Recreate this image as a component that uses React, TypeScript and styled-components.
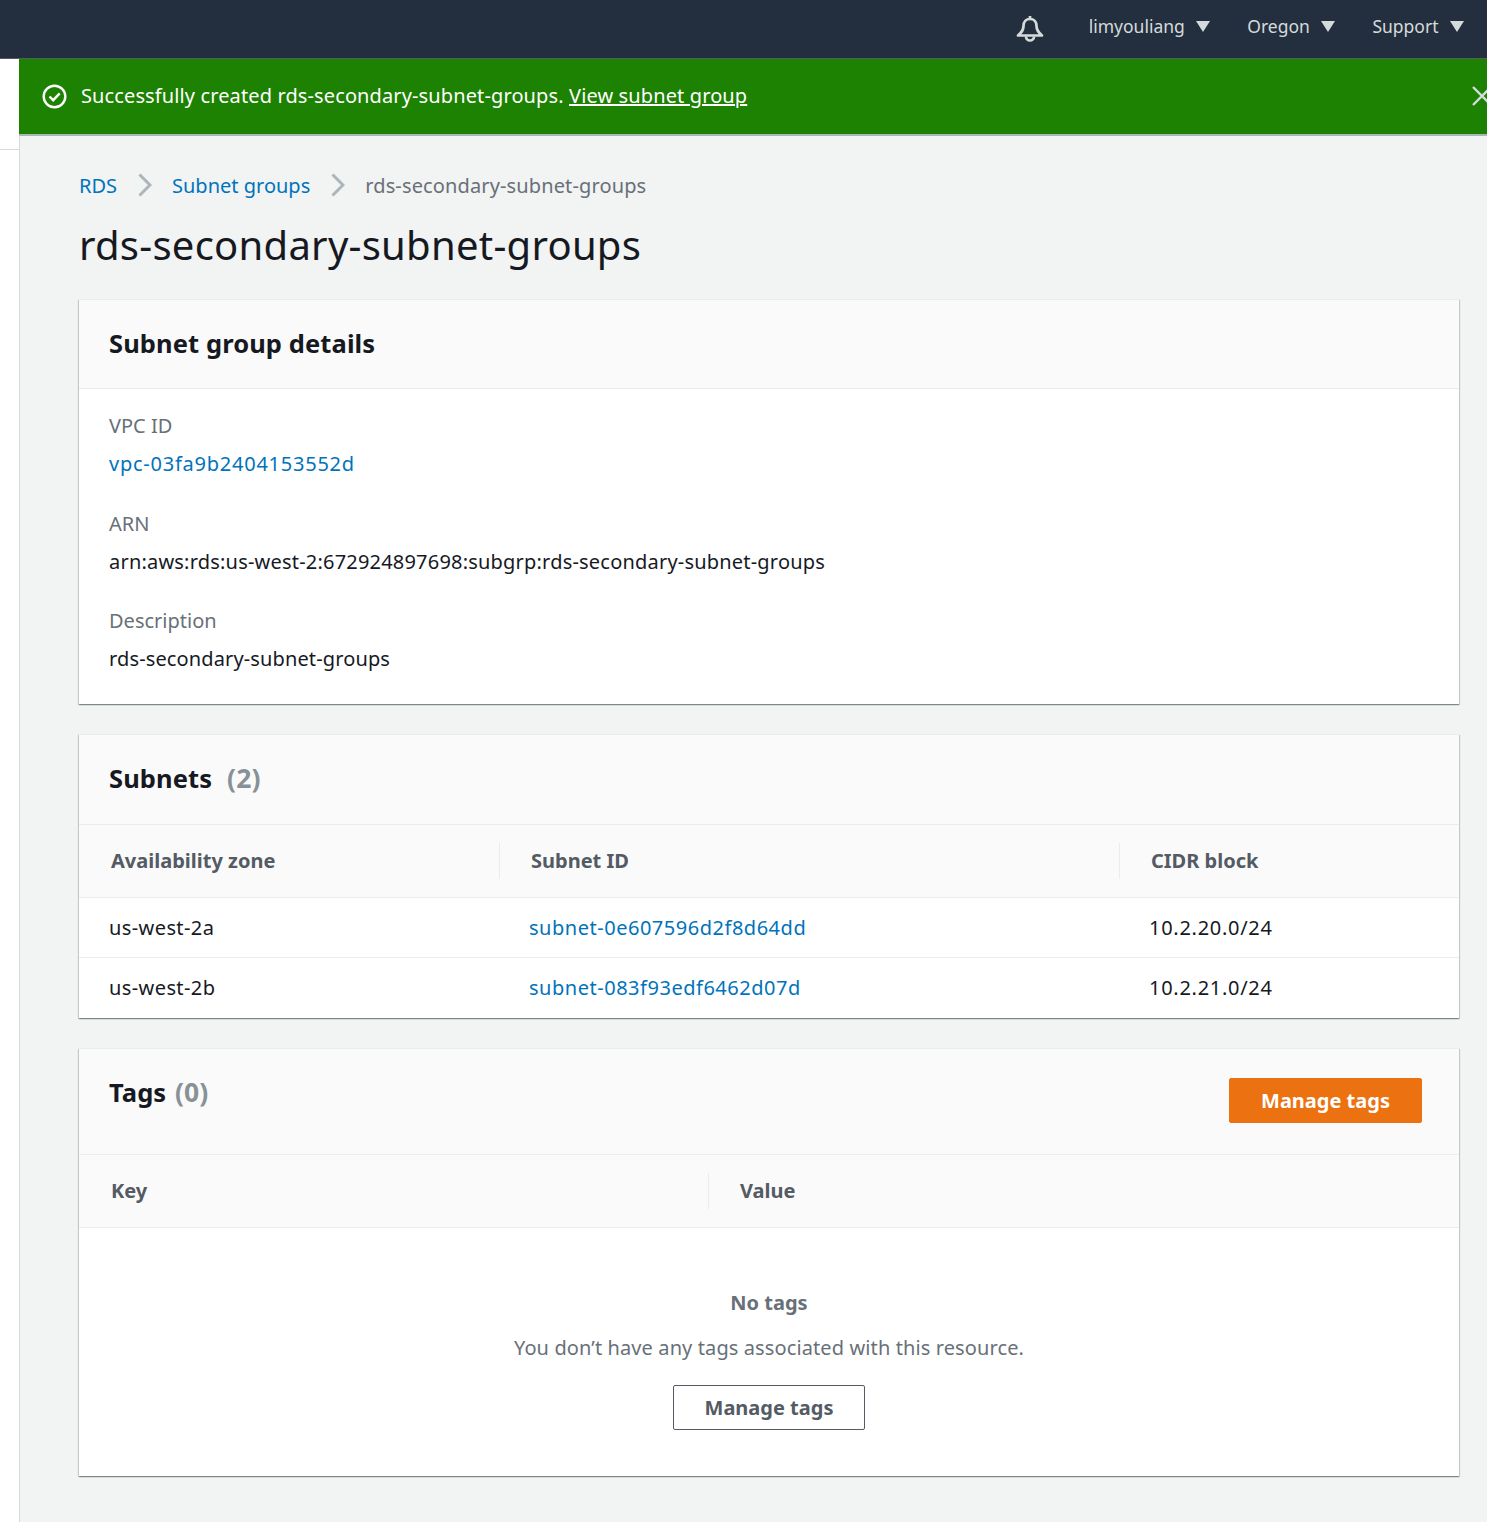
import React from 'react'
import styled, { createGlobalStyle } from 'styled-components'

const GlobalStyle = createGlobalStyle`
  html, body {
    margin: 0;
    padding: 0;
    background: #f2f3f3;
    overflow: hidden;
  }
  body {
    font-family: 'Noto Sans', 'Open Sans', sans-serif;
    font-size: 20px;
    color: #16191f;
  }
  * { box-sizing: border-box; }
`

const Page = styled.div`
  width: 1487px;
  height: 1522px;
  overflow: hidden;
`

const TopNav = styled.header`
  height: 59px;
  background: #232f3e;
  border-bottom: 1px solid #545b64;
  display: flex;
  align-items: center;
  justify-content: flex-end;
  padding-right: 23px;
  padding-bottom: 6px;
  color: #d5dbdb;
`

const BellButton = styled.span`
  display: flex;
  margin-right: 45px;
  margin-top: 6px;
`

const NavItem = styled.span<{ $gap: number }>`
  display: flex;
  align-items: center;
  gap: 11.5px;
  font-size: 17.5px;
  margin-left: ${p => p.$gap}px;
`

const Shell = styled.div`
  display: flex;
  align-items: stretch;
  height: 1463px;
`

const SideRail = styled.aside`
  width: 20px;
  flex: none;
  background: #fff;
  border-right: 1px solid #d5dbdb;
  padding-top: 90px;
`

const RailLine = styled.div`
  height: 1px;
  background: #d5dbdb;
`

const Content = styled.main`
  flex: 1;
  min-width: 0;
`

const Flash = styled.div`
  height: 77px;
  margin-left: -1px;
  background: #1d8102;
  border-bottom: 2px solid #aab7b8;
  display: flex;
  align-items: center;
  padding-left: 23px;
  color: #fff;
  font-size: 20px;
  position: relative;
`

const FlashText = styled.span`
  margin-left: 14px;
  padding-bottom: 2px;
  letter-spacing: 0.12px;
  a {
    color: #fff;
    text-decoration: underline;
  }
`

const CloseIcon = styled.span`
  position: absolute;
  left: 1453px;
  top: 27px;
  display: flex;
`

const Main = styled.div`
  padding: 0 28px 0 59px;
`

const Crumbs = styled.nav`
  display: flex;
  align-items: center;
  height: 30px;
  margin-top: 34px;
  font-size: 20px;
`

const Crumb = styled.a`
  color: #0073bb;
`

const CurrentCrumb = styled.span`
  color: #687078;
  letter-spacing: 0.13px;
`

const CrumbArrow = styled.span`
  display: flex;
  margin: 0 20.5px;
`

const Title = styled.h1`
  font-size: 40px;
  font-weight: 400;
  line-height: 50px;
  letter-spacing: 0.26px;
  margin: 20px 0 29px;
`

const Card = styled.section`
  background: #fff;
  box-shadow: 0 1px 1px 0 rgba(0, 28, 36, 0.3), 1px 1px 1px 0 rgba(0, 28, 36, 0.15), -1px 1px 1px 0 rgba(0, 28, 36, 0.15);
  border-top: 1px solid #eaeded;
  margin-bottom: 30px;
`

const CardHeader = styled.div<{ $height: number }>`
  height: ${p => p.$height}px;
  background: #fafafa;
  border-bottom: 1px solid #eaeded;
  display: flex;
  justify-content: space-between;
  padding: 0 37px 0 30px;
`

const CardTitle = styled.h2`
  margin: 25px 0 0;
  font-size: 25.5px;
  line-height: 36px;
  font-weight: 700;
  letter-spacing: 0.1px;
`

const Count = styled.span<{ $gap: number }>`
  font-weight: 700;
  color: #879196;
  font-size: 26.5px;
  margin-left: ${p => p.$gap}px;
`

const DetailsBody = styled.div`
  padding: 18px 30px 26px;
`

const Field = styled.div`
  margin-bottom: 21.5px;
  &:last-child { margin-bottom: 0; }
`

const FieldLabel = styled.div`
  color: #687078;
  line-height: 38px;
`

const FieldValue = styled.div<{ $track: number }>`
  line-height: 37px;
  padding-bottom: 1px;
  letter-spacing: ${p => p.$track}px;
`

const Link = styled.a<{ $track: number }>`
  color: #0073bb;
  letter-spacing: ${p => p.$track}px;
`

const Row = styled.div<{ $cols: string }>`
  display: grid;
  grid-template-columns: ${p => p.$cols};
`

const HeadRow = styled(Row)`
  height: 73px;
  background: #fafafa;
  border-bottom: 1px solid #eaeded;
  align-items: center;
`

const HeadCell = styled.div`
  height: 36px;
  line-height: 36px;
  padding-left: 31px;
  font-weight: 700;
  color: #545b64;
  border-left: 1px solid #eaeded;
  &:first-child {
    border-left: 0;
    padding-left: 32px;
  }
`

const BodyRow = styled(Row)`
  height: 60px;
  align-items: center;
  border-bottom: 1px solid #eaeded;
  &:last-child {
    border-bottom: 0;
    padding-bottom: 1px;
  }
`

const BodyCell = styled.div<{ $track?: number }>`
  padding-left: 30px;
  letter-spacing: ${p => p.$track ?? 0}px;
`

const PrimaryButton = styled.button`
  align-self: flex-start;
  margin-top: 29px;
  width: 193px;
  height: 45px;
  background: #ec7211;
  color: #fff;
  border: 1px solid #ec7211;
  border-radius: 2px;
  font: 700 20px 'Noto Sans', sans-serif;
`

const EmptyState = styled.div`
  height: 248px;
  padding-top: 56px;
  display: flex;
  flex-direction: column;
  align-items: center;
  color: #687078;
`

const EmptyTitle = styled.div`
  font-weight: 700;
  line-height: 38px;
`

const EmptyText = styled.div`
  line-height: 38px;
  margin-top: 7px;
  letter-spacing: 0.11px;
`

const SecondaryButton = styled.button`
  margin-top: 18px;
  width: 192px;
  height: 45px;
  background: #fff;
  color: #545b64;
  border: 1px solid #545b64;
  border-radius: 2px;
  font: 700 20px 'Noto Sans', sans-serif;
`

const Caret = () => (
  <svg width="14" height="11" viewBox="0 0 14 11">
    <path d="M0 0h14L7 11z" fill="#d5dbdb" />
  </svg>
)

const Chevron = () => (
  <svg width="14" height="24" viewBox="0 0 14 24" fill="none">
    <path d="M1.5 1.5 12 12 1.5 22.5" stroke="#aab7b8" strokeWidth="3" />
  </svg>
)

const subnets = [
  { zone: 'us-west-2a', id: 'subnet-0e607596d2f8d64dd', cidr: '10.2.20.0/24' },
  { zone: 'us-west-2b', id: 'subnet-083f93edf6462d07d', cidr: '10.2.21.0/24' },
]

const subnetCols = '420px 620px 1fr'
const tagCols = '629px 1fr'

export default function App() {
  return (
    <Page>
      <GlobalStyle />
      <TopNav>
        <BellButton>
          <svg width="28" height="28" viewBox="0 0 28 28" fill="none" stroke="#d5dbdb" strokeWidth="2.7" strokeLinejoin="round">
            <path d="M14 1v3M14 4c-4 0-6.500 3-6.500 7 0 4.500-2 6.500-5.500 9.500h24c-3.500-3-5.500-5-5.500-9.500 0-4-2.500-7-6.500-7z" />
            <path d="M10 21.500a4 4 0 0 0 8 0" />
          </svg>
        </BellButton>
        <NavItem $gap={0}>limyouliang <Caret /></NavItem>
        <NavItem $gap={37}>Oregon <Caret /></NavItem>
        <NavItem $gap={37}>Support <Caret /></NavItem>
      </TopNav>
      <Shell>
        <SideRail>
          <RailLine />
        </SideRail>
        <Content>
          <Flash>
            <svg width="25" height="25" viewBox="0 0 25 25" fill="none" stroke="#fff" strokeWidth="2.4">
              <circle cx="12.500" cy="12.500" r="10.800" />
              <path d="M7.500 12.500l3.700 3.700 6.500-6.800" />
            </svg>
            <FlashText>
              Successfully created rds-secondary-subnet-groups. <a>View subnet group</a>
            </FlashText>
            <CloseIcon>
              <svg width="20" height="20" viewBox="0 0 20 20" fill="none" stroke="#d5dbdb" strokeWidth="2.4">
                <path d="M1 1l18 18M19 1L1 19" />
              </svg>
            </CloseIcon>
          </Flash>
          <Main>
            <Crumbs>
              <Crumb>RDS</Crumb>
              <CrumbArrow><Chevron /></CrumbArrow>
              <Crumb>Subnet groups</Crumb>
              <CrumbArrow><Chevron /></CrumbArrow>
              <CurrentCrumb>rds-secondary-subnet-groups</CurrentCrumb>
            </Crumbs>
            <Title>rds-secondary-subnet-groups</Title>

            <Card>
              <CardHeader $height={89}>
                <CardTitle>Subnet group details</CardTitle>
              </CardHeader>
              <DetailsBody>
                <Field>
                  <FieldLabel>VPC ID</FieldLabel>
                  <FieldValue $track={0}><Link $track={0.76}>vpc-03fa9b2404153552d</Link></FieldValue>
                </Field>
                <Field>
                  <FieldLabel>ARN</FieldLabel>
                  <FieldValue $track={0.2}>arn:aws:rds:us-west-2:672924897698:subgrp:rds-secondary-subnet-groups</FieldValue>
                </Field>
                <Field>
                  <FieldLabel>Description</FieldLabel>
                  <FieldValue $track={0.13}>rds-secondary-subnet-groups</FieldValue>
                </Field>
              </DetailsBody>
            </Card>

            <Card>
              <CardHeader $height={90}>
                <CardTitle>Subnets<Count $gap={15}>(2)</Count></CardTitle>
              </CardHeader>
              <HeadRow $cols={subnetCols}>
                <HeadCell>Availability zone</HeadCell>
                <HeadCell>Subnet ID</HeadCell>
                <HeadCell>CIDR block</HeadCell>
              </HeadRow>
              {subnets.map(s => (
                <BodyRow $cols={subnetCols} key={s.id}>
                  <BodyCell $track={0.4}>{s.zone}</BodyCell>
                  <BodyCell><Link $track={0.52}>{s.id}</Link></BodyCell>
                  <BodyCell $track={0.72}>{s.cidr}</BodyCell>
                </BodyRow>
              ))}
            </Card>

            <Card>
              <CardHeader $height={106}>
                <CardTitle>Tags <Count $gap={2}>(0)</Count></CardTitle>
                <PrimaryButton>Manage tags</PrimaryButton>
              </CardHeader>
              <HeadRow $cols={tagCols}>
                <HeadCell>Key</HeadCell>
                <HeadCell>Value</HeadCell>
              </HeadRow>
              <EmptyState>
                <EmptyTitle>No tags</EmptyTitle>
                <EmptyText>You don’t have any tags associated with this resource.</EmptyText>
                <SecondaryButton>Manage tags</SecondaryButton>
              </EmptyState>
            </Card>
          </Main>
        </Content>
      </Shell>
    </Page>
  )
}
